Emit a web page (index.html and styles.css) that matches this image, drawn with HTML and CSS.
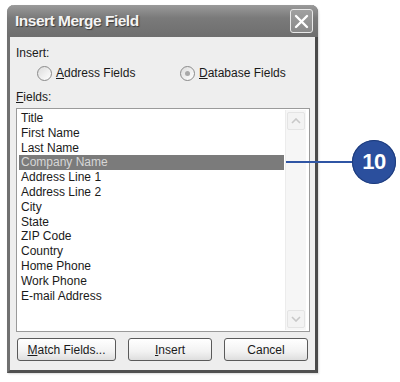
FILE: index.html
```html
<!DOCTYPE html>
<html>
<head>
<meta charset="utf-8">
<link rel="stylesheet" href="styles.css">
</head>
<body>
<div class="stage">
  <div class="window">
    <div class="titlebar">
      <span class="title">Insert Merge Field</span>
      <span class="close">
        <svg width="15" height="15" viewBox="0 0 15 15"><path d="M2 2 L13 13 M13 2 L2 13" stroke="#fff" stroke-width="2.4" stroke-linecap="round"/></svg>
      </span>
    </div>
    <div class="content">
      <div class="label">Insert:</div>
      <div class="radios">
        <label class="radio"><span class="circle"></span><span><u>A</u>ddress Fields</span></label>
        <label class="radio"><span class="circle on"><span class="dot"></span></span><span><u>D</u>atabase Fields</span></label>
      </div>
      <div class="label fields"><u>F</u>ields:</div>
      <div class="listbox">
        <ul class="items">
          <li>Title</li>
          <li>First Name</li>
          <li>Last Name</li>
          <li class="sel">Company Name</li>
          <li>Address Line 1</li>
          <li>Address Line 2</li>
          <li>City</li>
          <li>State</li>
          <li>ZIP Code</li>
          <li>Country</li>
          <li>Home Phone</li>
          <li>Work Phone</li>
          <li>E-mail Address</li>
        </ul>
        <div class="scrollbar">
          <span class="sbtn"><svg width="10" height="6" viewBox="0 0 10 6"><path d="M1 5 L5 1 L9 5" fill="none" stroke="#c8c8c8" stroke-width="1.6"/></svg></span>
          <span class="sbtn"><svg width="10" height="6" viewBox="0 0 10 6"><path d="M1 1 L5 5 L9 1" fill="none" stroke="#c8c8c8" stroke-width="1.6"/></svg></span>
        </div>
      </div>
      <div class="buttons">
        <button class="btn wide"><u>M</u>atch Fields...</button>
        <button class="btn"><u>I</u>nsert</button>
        <button class="btn">Cancel</button>
      </div>
    </div>
  </div>
  <div class="callout">
    <span class="line"></span>
    <span class="badge">10</span>
  </div>
</div>
</body>
</html>
```
FILE: styles.css
```css
html, body {
  margin: 0;
  padding: 0;
  background: #ffffff;
}
body {
  font-family: "Liberation Sans", Arial, sans-serif;
  font-size: 12px;
  color: #1a1a1a;
}
.stage {
  position: relative;
  width: 400px;
  height: 382px;
  padding: 5px 0 0 7px;
  box-sizing: border-box;
}
.window {
  width: 311px;
  height: 368px;
  box-sizing: border-box;
  border-left: 3px solid #707070;
  border-right: 3px solid #4a4a4a;
  border-bottom: 3px solid #505050;
  border-radius: 7px 7px 0 0;
  background: #eeeeee;
  display: flex;
  flex-direction: column;
  box-shadow: 1px 1px 2px rgba(0,0,0,0.15);
}
.titlebar {
  height: 32px;
  margin: 0 -3px;
  border-radius: 7px 7px 0 0;
  background: linear-gradient(#9a9a9a, #7a7a7a 40%, #6e6e6e);
  display: flex;
  align-items: center;
  justify-content: space-between;
  padding: 0 5px 0 8px;
  box-sizing: border-box;
}
.title {
  font-family: "Liberation Sans", Arial, sans-serif;
  font-weight: bold;
  font-size: 15.5px;
  color: #f4f4f4;
  text-shadow: 1px 1px 1px #3c3c3c;
  letter-spacing: -0.5px;
}
.close {
  width: 21px;
  height: 22px;
  border: 1.5px solid #e8e8e8;
  border-radius: 3px;
  background: linear-gradient(#a0a0a0, #8a8a8a);
  display: flex;
  align-items: center;
  justify-content: center;
}
.content {
  flex: 1;
  padding: 9px 4px 0 6px;
  display: flex;
  flex-direction: column;
}
.label {
  height: 15px;
  line-height: 15px;
}
.radios {
  display: flex;
  height: 24px;
  align-items: center;
  padding-left: 21px;
}
.radio {
  display: flex;
  align-items: center;
  gap: 4px;
}
.radio:first-child {
  width: 143px;
}
.circle {
  width: 13px;
  height: 13px;
  border: 1px solid #8a8a8a;
  border-radius: 50%;
  background: linear-gradient(135deg, #dcdcdc, #ffffff);
  display: flex;
  align-items: center;
  justify-content: center;
}
.dot {
  width: 5px;
  height: 5px;
  border-radius: 50%;
  background: #a8a8a8;
}
.fields {
  margin-top: 5px;
}
.listbox {
  margin-top: 3px;
  width: 294px;
  height: 224px;
  box-sizing: border-box;
  border: 1px solid #9a9a9a;
  background: #ffffff;
  display: flex;
  padding: 1px 1px 1px 2px;
}
.items {
  list-style: none;
  margin: 0;
  padding: 1px 0 0 0;
  flex: 1;
}
.items li {
  height: 14.8px;
  line-height: 14.8px;
  padding-left: 2px;
  white-space: nowrap;
}
.items li.sel {
  background: #7b7b7b;
  color: #d6d6d6;
}
.scrollbar {
  width: 20px;
  margin-left: 1px;
  margin-right: 2px;
  background: #f6f6f6;
  border-left: 1px solid #ececec;
  display: flex;
  flex-direction: column;
  justify-content: space-between;
  padding: 2px 0;
}
.sbtn {
  height: 16px;
  margin: 0 1px;
  border: 1px solid #e4e4e4;
  border-radius: 2px;
  background: #f3f3f3;
  display: flex;
  align-items: center;
  justify-content: center;
}
.buttons {
  display: flex;
  margin-top: 6px;
  gap: 12px;
  padding-left: 1px;
}
.btn {
  font-family: "Liberation Sans", Arial, sans-serif;
  font-size: 12px;
  color: #1a1a1a;
  width: 84px;
  height: 23px;
  border: 1px solid #5a5a5a;
  border-radius: 3px;
  background: linear-gradient(#ffffff, #f2f2f2 60%, #dedede);
  padding: 0;
}
.btn.wide {
  width: 99px;
}
.callout {
  position: absolute;
  left: 286px;
  top: 140px;
  display: flex;
  align-items: center;
}
.line {
  width: 66px;
  height: 2px;
  background: #2f55a4;
}
.badge {
  width: 44px;
  height: 44px;
  border-radius: 50%;
  background: #2b4f9d;
  box-shadow: inset 0 0 0 1px #1e3c7c;
  color: #ffffff;
  font-family: "Liberation Sans", Arial, sans-serif;
  font-weight: bold;
  font-size: 22px;
  display: flex;
  align-items: center;
  justify-content: center;
  letter-spacing: -0.5px;
}
```
